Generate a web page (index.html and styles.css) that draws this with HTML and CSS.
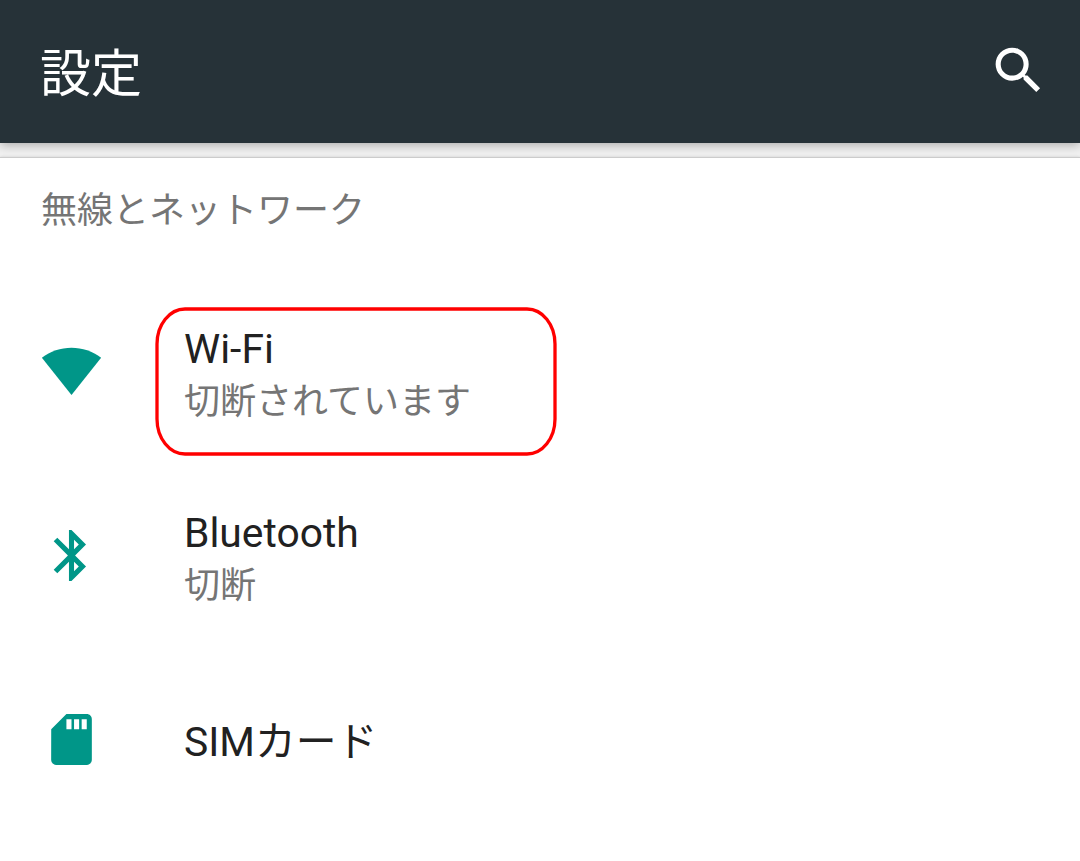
FILE: index.html
```html
<!DOCTYPE html>
<html lang="ja">
<head>
	<meta charset="UTF-8">
	<meta name="viewport" content="width=device-width, initial-scale=1.0">
	<title>設定</title>
	<link rel="stylesheet" href="styles.css">
</head>
<body>
	<header class="header">
		<h1 class="header__title">設定</h1>
		<svg class="icon header__search" viewBox="0 0 24 24">
			<path d="M15.5 14h-.79l-.28-.27A6.471 6.471 0 0 0 16 9.5 6.5 6.5 0 1 0 9.5 16c1.61 0 3.09-.59 4.23-1.57l.27.28v.79l5 4.99L20.49 19l-4.99-5zm-6 0C7.01 14 5 11.99 5 9.5S7.01 5 9.5 5 14 7.01 14 9.5 11.99 14 9.5 14z"/>
		</svg>
	</header>
	<main class="settings">
		<h2 class="settings__category">無線とネットワーク</h2>
		<div class="item">
			<svg class="icon" viewBox="0 0 24 24">
				<path d="M12 21.2L.35 6.6C3.6 4.1 7.8 2.7 12 2.7s8.4 1.4 11.65 3.9z"/>
			</svg>
			<div class="item__text">
				<div class="item__title">Wi-Fi</div>
				<div class="item__summary">切断されています</div>
			</div>
			<svg class="item__mark" viewBox="0 0 402 149">
				<rect x="2" y="2" width="398" height="145" rx="28" ry="35"/>
			</svg>
		</div>
		<div class="item">
			<svg class="icon" viewBox="0 0 24 24">
				<path d="M17.71 7.71L12 2h-1v7.59L6.41 5 5 6.41 10.59 12 5 17.59 6.41 19 11 14.41V22h1l5.71-5.71-4.3-4.29 4.3-4.29zM13 5.83l1.88 1.88L13 9.59V5.83zm1.88 10.46L13 18.17v-3.76l1.88 1.88z"/>
			</svg>
			<div class="item__text">
				<div class="item__title">Bluetooth</div>
				<div class="item__summary">切断</div>
			</div>
		</div>
		<div class="item">
			<svg class="icon" viewBox="0 0 24 24">
				<path d="M18 2h-8L4.02 8 4 20c0 1.1.9 2 2 2h12c1.1 0 2-.9 2-2V4c0-1.1-.9-2-2-2zm-6 6h-2V4h2v4zm3 0h-2V4h2v4zm3 0h-2V4h2v4z"/>
			</svg>
			<div class="item__text">
				<div class="item__title">SIMカード</div>
			</div>
		</div>
	</main>
</body>
</html>
```
FILE: styles.css
```css
*{
	box-sizing: border-box;
}
body{
	margin: 0;
	background: #f1f1f1;
	font-family: Roboto, "Noto Sans CJK JP", sans-serif;
	color: #212121;
	overflow: hidden;
}
.header{
	position: relative;
	display: flex;
	justify-content: space-between;
	align-items: center;
	height: 143px;
	padding: 0 31px 0 40px;
	background: #263238;
	color: white;
	box-shadow: 0 2px 10px rgba(0,0,0,.3);
}
.header__title{
	margin: 0;
	padding-top: 6px;
	font-size: 51px;
	font-weight: 400;
	line-height: 74px;
}
.icon{
	flex: none;
	width: 61px;
	height: 61px;
	fill: #009688;
}
.header__search{
	fill: white;
	margin-bottom: 3px;
}
.settings{
	margin-top: 14px;
	height: 704px;
	border-top: 1px solid #cccccc;
	background: white;
	box-shadow: 0 0 3px rgba(0,0,0,.15);
}
.settings__category{
	margin: 0;
	height: 121px;
	padding: 27px 41px 0;
	font-size: 36px;
	font-weight: 400;
	line-height: 52px;
	color: #757575;
}
.item{
	position: relative;
	display: flex;
	align-items: center;
	height: 184px;
	padding-left: 41px;
}
.item__text{
	margin-left: 82px;
	padding-top: 6px;
}
.item__title{
	font-size: 40.8px;
	line-height: 56px;
}
.item__summary{
	font-size: 36px;
	line-height: 50px;
	color: #757575;
}
.item__mark{
	position: absolute;
	top: 28px;
	left: 155px;
	width: 402px;
	height: 149px;
	fill: none;
	stroke: #ff0000;
	stroke-width: 3.3px;
}
```
